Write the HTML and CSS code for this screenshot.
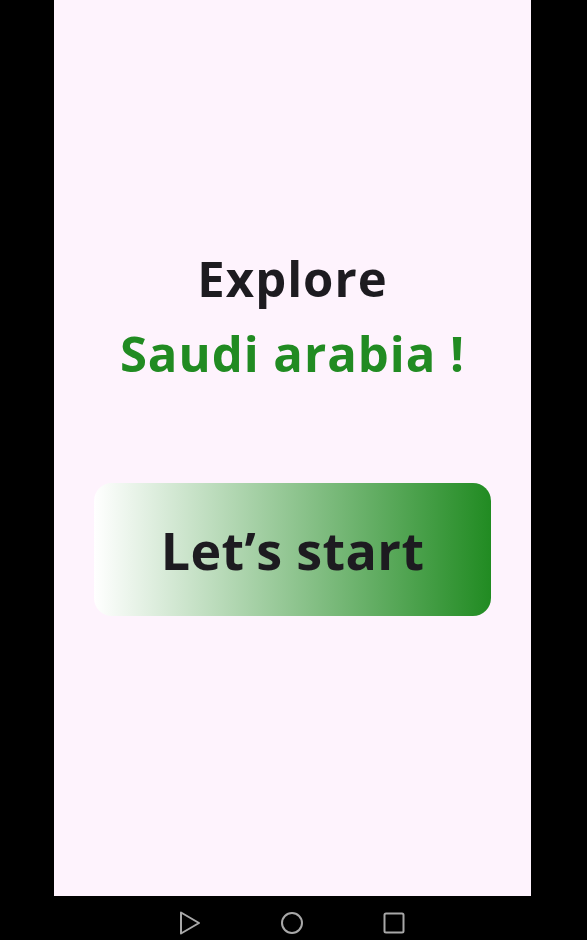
FILE: index.html
```html
<!DOCTYPE html>
<html>
<head>
<meta charset="utf-8">
<link rel="stylesheet" href="styles.css">
</head>
<body>
<div class="device">
  <main class="screen">
    <h1 class="title">Explore</h1>
    <h2 class="subtitle">Saudi arabia !</h2>
    <button class="start">Let’s start</button>
  </main>
  <nav class="navbar">
    <svg class="nav-icon" width="22" height="24" viewBox="0 0 22 24"><path d="M2 1.5 L20 12 L2 22.5 Z" fill="none" stroke="#a8a8a8" stroke-width="2" stroke-linejoin="round"/></svg>
    <svg class="nav-icon" width="24" height="24" viewBox="0 0 24 24"><circle cx="12" cy="12" r="10" fill="none" stroke="#a8a8a8" stroke-width="2"/></svg>
    <svg class="nav-icon" width="22" height="22" viewBox="0 0 22 22"><rect x="1.5" y="1.5" width="19" height="19" rx="1.5" fill="none" stroke="#a8a8a8" stroke-width="2"/></svg>
  </nav>
</div>
</body>
</html>
```
FILE: styles.css
```css
html, body {
  margin: 0;
  padding: 0;
  background: #000;
}
body {
  width: 587px;
  height: 940px;
  overflow: hidden;
  font-family: "Open Sans", "Noto Sans", sans-serif;
}
.device {
  display: flex;
  flex-direction: column;
  height: 940px;
}
.screen {
  width: 477px;
  height: 896px;
  margin-left: 54px;
  background: #fef3fd;
  display: flex;
  flex-direction: column;
  align-items: center;
  padding-top: 245px;
  box-sizing: border-box;
}
.title {
  margin: 0;
  font-size: 49px;
  line-height: 66px;
  font-weight: 700;
  letter-spacing: 1px;
  color: #1d1b20;
}
.subtitle {
  margin: 9px 0 0;
  font-size: 49px;
  line-height: 66px;
  font-weight: 700;
  letter-spacing: 1px;
  color: #218b22;
}
.start {
  margin-top: 97px;
  width: 397px;
  height: 133px;
  border: none;
  border-radius: 18px;
  background: linear-gradient(90deg, #ffffff 0%, #218b22 100%);
  font-family: inherit;
  font-size: 52px;
  font-weight: 700;
  letter-spacing: 0.4px;
  color: #1d1b20;
  padding: 0;
}
.navbar {
  height: 44px;
  display: flex;
  align-items: center;
  justify-content: center;
  gap: 79px;
  padding-top: 10px;
  box-sizing: border-box;
  padding-right: 3px;
}
.nav-icon {
  display: block;
}
```
